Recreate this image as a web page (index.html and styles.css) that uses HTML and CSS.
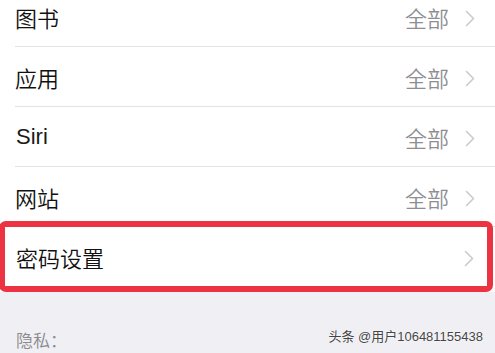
FILE: index.html
```html
<!DOCTYPE html>
<html lang="zh">
<head>
<meta charset="utf-8">
<link rel="stylesheet" href="styles.css">
</head>
<body>
<div class="list">
  <div class="row"><div class="row-inner"><span class="label">图书</span><span class="value">全部</span><svg class="chev" viewBox="0 0 10 17" width="10" height="17"><polyline points="1.5,1.5 8.5,8.5 1.5,15.5"/></svg></div></div>
  <div class="row"><div class="row-inner"><span class="label">应用</span><span class="value">全部</span><svg class="chev" viewBox="0 0 10 17" width="10" height="17"><polyline points="1.5,1.5 8.5,8.5 1.5,15.5"/></svg></div></div>
  <div class="row"><div class="row-inner"><span class="label latin">Siri</span><span class="value">全部</span><svg class="chev" viewBox="0 0 10 17" width="10" height="17"><polyline points="1.5,1.5 8.5,8.5 1.5,15.5"/></svg></div></div>
  <div class="row"><div class="row-inner"><span class="label">网站</span><span class="value">全部</span><svg class="chev" viewBox="0 0 10 17" width="10" height="17"><polyline points="1.5,1.5 8.5,8.5 1.5,15.5"/></svg></div></div>
  <div class="highlight">
    <div class="row row-hl"><div class="row-inner no-line"><span class="label">密码设置</span><svg class="chev" viewBox="0 0 10 17" width="10" height="17"><polyline points="1.5,1.5 8.5,8.5 1.5,15.5"/></svg></div></div>
  </div>
</div>
<div class="section-header">隐私：</div>
<div class="watermark">头条 @用户106481155438</div>
</body>
</html>
```
FILE: styles.css
```css
html, body {
  margin: 0;
  padding: 0;
}
body {
  width: 495px;
  height: 353px;
  overflow: hidden;
  background: #efeff4;
  font-family: "Noto Sans", "Noto Sans CJK SC", sans-serif;
  position: relative;
}
.list {
  background: #ffffff;
  margin-top: -13px;
}
.row {
  padding-left: 15px;
  background: #ffffff;
}
.row-inner {
  height: 59px;
  border-bottom: 1px solid #e3e3e7;
  display: flex;
  align-items: center;
  padding-right: 20px;
}
.row-inner.no-line {
  border-bottom: none;
  height: 59px;
}
.label {
  flex: 1;
  font-size: 22px;
  line-height: 26px;
  font-weight: 350;
  color: #111111;
  font-family: "Noto Sans CJK SC", sans-serif;
}
.label.latin {
  font-family: "Liberation Sans", "Noto Sans CJK SC", sans-serif;
  font-weight: 400;
  color: #1a1a1a;
  padding-left: 1px;
}
.value {
  font-size: 22px;
  line-height: 26px;
  font-weight: 350;
  color: #8e8e93;
  font-family: "Noto Sans CJK SC", sans-serif;
  margin-right: 16px;
}
.chev {
  display: block;
  margin-top: 3px;
}
.chev polyline {
  fill: none;
  stroke: #cacacf;
  stroke-width: 1.6;
  stroke-linecap: round;
  stroke-linejoin: round;
}
.highlight {
  margin: -6px 2px 0 -1px;
  border: 6px solid #eb3341;
  border-radius: 7px;
  background: #ffffff;
  position: relative;
}
.row-hl {
  padding-left: 11px;
}
.row-hl .row-inner {
  padding-right: 13px;
}
.section-header {
  padding: 38px 0 0 16px;
  font-size: 17px;
  line-height: 20px;
  font-weight: 350;
  color: #8a8a8e;
  font-family: "Noto Sans CJK SC", sans-serif;
}
.watermark {
  position: absolute;
  right: 12px;
  bottom: 8px;
  font-size: 13px;
  line-height: 16px;
  color: #454545;
  font-family: "Liberation Sans", "Noto Sans CJK SC", sans-serif;
  text-shadow: 0 0 1px #ffffff, 0 0 2px #ffffff;
}
```
